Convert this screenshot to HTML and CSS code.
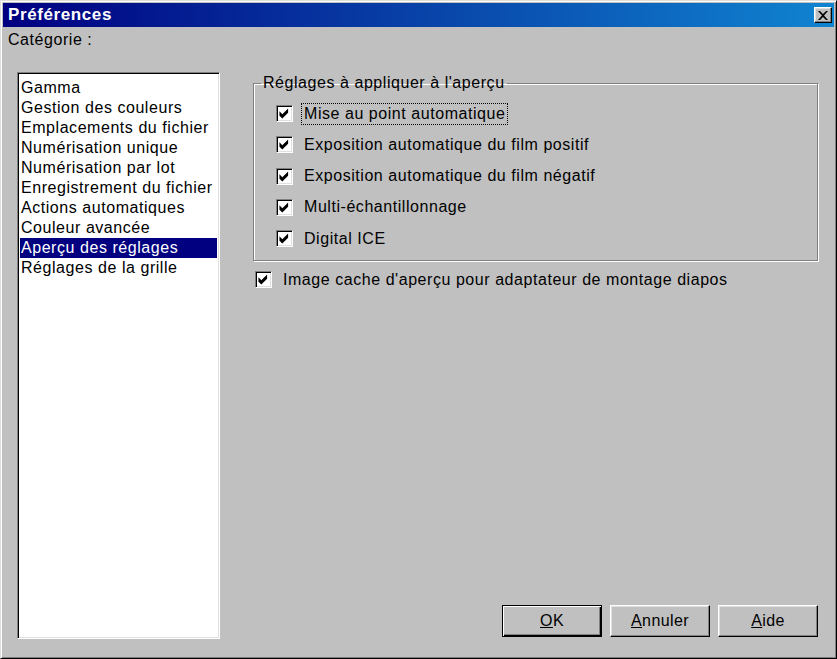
FILE: index.html
```html
<!DOCTYPE html>
<html lang="fr">
<head>
    <meta charset="UTF-8">
    <title>Préférences</title>
    <link rel="stylesheet" href="styles.css">
</head>
<body>
    <div class="window">
        <div class="titlebar">
            <span class="title">Préférences</span>
            <button class="close-btn" type="button">
                <svg width="10" height="9" viewBox="0 0 10 9">
                    <path d="M0 0h2l3 3 3-3h2L6 4.5 10 9H8L5 6 2 9H0l4-4.5z" fill="#000"/>
                </svg>
            </button>
        </div>

        <div class="dialog-body">
            <div class="category-pane">
                <div class="category-label">Catégorie :</div>
                <ul class="category-list">
                    <li>Gamma</li>
                    <li>Gestion des couleurs</li>
                    <li>Emplacements du fichier</li>
                    <li>Numérisation unique</li>
                    <li>Numérisation par lot</li>
                    <li>Enregistrement du fichier</li>
                    <li>Actions automatiques</li>
                    <li>Couleur avancée</li>
                    <li class="selected">Aperçu des réglages</li>
                    <li>Réglages de la grille</li>
                </ul>
            </div>

            <div class="settings-pane">
                <fieldset class="group">
                    <legend>Réglages à appliquer à l'aperçu</legend>
                    <label class="check">
                        <span class="box"><svg viewBox="0 0 9 9"><path d="M1 3l2 2 4-4v3L3 8 1 6z"/></svg></span>
                        <span class="check-text focused">Mise au point automatique</span>
                    </label>
                    <label class="check">
                        <span class="box"><svg viewBox="0 0 9 9"><path d="M1 3l2 2 4-4v3L3 8 1 6z"/></svg></span>
                        <span class="check-text">Exposition automatique du film positif</span>
                    </label>
                    <label class="check">
                        <span class="box"><svg viewBox="0 0 9 9"><path d="M1 3l2 2 4-4v3L3 8 1 6z"/></svg></span>
                        <span class="check-text">Exposition automatique du film négatif</span>
                    </label>
                    <label class="check">
                        <span class="box"><svg viewBox="0 0 9 9"><path d="M1 3l2 2 4-4v3L3 8 1 6z"/></svg></span>
                        <span class="check-text">Multi-échantillonnage</span>
                    </label>
                    <label class="check">
                        <span class="box"><svg viewBox="0 0 9 9"><path d="M1 3l2 2 4-4v3L3 8 1 6z"/></svg></span>
                        <span class="check-text">Digital ICE</span>
                    </label>
                </fieldset>

                <label class="check standalone">
                    <span class="box"><svg viewBox="0 0 9 9"><path d="M1 3l2 2 4-4v3L3 8 1 6z"/></svg></span>
                    <span class="check-text">Image cache d'aperçu pour adaptateur de montage diapos</span>
                </label>

                <div class="buttons">
                    <button class="btn default" type="button"><u>O</u>K</button>
                    <button class="btn" type="button"><u>A</u>nnuler</button>
                    <button class="btn" type="button"><u>A</u>ide</button>
                </div>
            </div>
        </div>
    </div>
</body>
</html>
```

FILE: styles.css
```css
* {
    margin: 0;
    padding: 0;
    box-sizing: border-box;
}

body {
    background: #c0c0c0;
    font-family: "Liberation Sans", Arial, sans-serif;
    font-size: 16px;
    letter-spacing: 0.55px;
    color: #000;
}

/* window frame: light top/left, dark bottom/right */
.window {
    width: 837px;
    height: 659px;
    display: flex;
    flex-direction: column;
    padding: 2px;
    background: #c0c0c0;
    border: 1px solid;
    border-color: #dfdfdf #000 #000 #dfdfdf;
    box-shadow: inset 1px 1px #fff, inset -1px -1px #808080;
}

.titlebar {
    height: 24px;
    display: flex;
    align-items: center;
    justify-content: space-between;
    padding: 0 2px 0 5px;
    background: linear-gradient(to right, #000080, #1084d0);
}

.title {
    color: #fff;
    font-weight: bold;
    font-size: 17px;
    letter-spacing: 0.6px;
}

.close-btn {
    width: 18px;
    height: 16px;
    display: flex;
    align-items: center;
    justify-content: center;
    background: #c0c0c0;
    border: 1px solid;
    border-color: #fff #000 #000 #fff;
    box-shadow: inset -1px -1px #808080, inset 1px 1px #dfdfdf;
}

.dialog-body {
    flex: 1;
    display: flex;
    padding: 4px 16px 17px 5px;
}

.category-pane {
    width: 212px;
    display: flex;
    flex-direction: column;
}

.category-label {
    height: 41px;
    line-height: 18px;
}

.category-list {
    flex: 1;
    margin-left: 9px;
    list-style: none;
    background: #fff;
    border: 1px solid;
    border-color: #808080 #fff #fff #808080;
    box-shadow: inset 1px 1px #000, inset -1px -1px #dfdfdf;
    padding: 5px 2px 2px;
}

.category-list li {
    height: 20px;
    line-height: 20px;
    padding-left: 1px;
    white-space: nowrap;
}

.category-list li.selected {
    background: #000080;
    color: #fff;
}

.settings-pane {
    flex: 1;
    display: flex;
    flex-direction: column;
    margin-left: 33px;
}

/* etched group frame */
.group {
    margin-top: 43px;
    height: 187px;
    padding: 6px 0 0 22px;
    border: 1px solid #808080;
    box-shadow: 1px 1px #fff, inset 1px 1px #fff;
}

.group legend {
    margin-left: -15px;
    padding: 0 2px;
    line-height: 18px;
}

.check {
    display: flex;
    align-items: center;
    height: 31.25px;
    gap: 8px;
}

.box {
    width: 17px;
    height: 17px;
    flex-shrink: 0;
    background: #fff;
    border: 1px solid;
    border-color: #808080 #fff #fff #808080;
    box-shadow: inset 1px 1px #000, inset -1px -1px #dfdfdf;
    display: flex;
    padding: 1px;
}

.box svg {
    width: 100%;
    height: 100%;
    fill: #000;
}

.check-text {
    padding: 1px 2px;
    border: 1px dotted transparent;
}

.check-text.focused {
    border-color: #000;
}

.standalone {
    margin-top: 3px;
    margin-left: 2px;
}

.buttons {
    margin-top: auto;
    margin-bottom: 2px;
    display: flex;
    justify-content: flex-end;
    gap: 8px;
}

.btn {
    width: 100px;
    height: 32px;
    font-family: inherit;
    font-size: 16px;
    letter-spacing: 0.4px;
    color: #000;
    background: #c0c0c0;
    border: 1px solid;
    border-color: #fff #000 #000 #fff;
    box-shadow: inset -1px -1px #808080, inset 1px 1px #dfdfdf;
}

.btn.default {
    border: 1px solid #000;
    box-shadow: inset 1px 1px #fff, inset -1px -1px #000, inset -2px -2px #808080;
}
```
